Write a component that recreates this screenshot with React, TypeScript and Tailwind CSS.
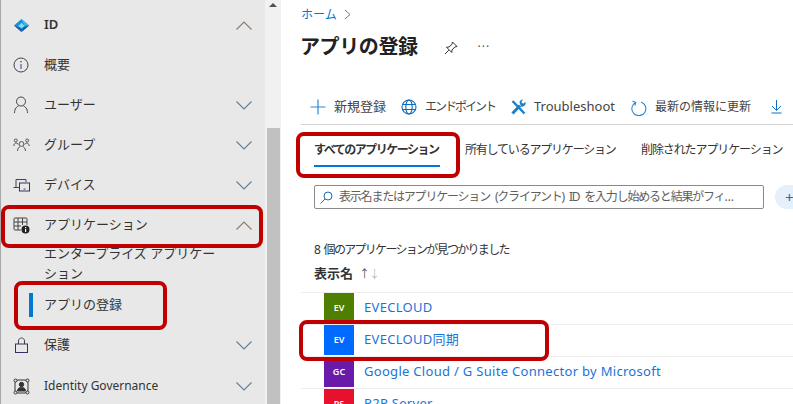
import React from "react";

const font = "font-['Noto_Sans','Noto_Sans_CJK_JP',sans-serif]";

const Chevron = ({ up }: { up?: boolean }) => (
  <svg width="16" height="9" viewBox="0 0 16 9" fill="none" className="shrink-0">
    <path
      d={up ? "M0.500 8.500 L8 1 L15.500 8.500" : "M0.500 0.500 L8 8 L15.500 0.500"}
      stroke={up ? "#8a7a6a" : "#5f7f9a"}
      strokeWidth="1.100"
    />
  </svg>
);

const IdIcon = () => (
  <svg width="17" height="15" viewBox="0 0 18 16">
    <path d="M9 1 L17 8 L9 15 L1 8 Z" fill="#1b8fd8" />
    <path d="M9 1 L17 8 L12 8 Z" fill="#2fc0ee" />
    <path d="M1 8 L9 15 L9 11 Z" fill="#1a5fa8" />
    <path d="M9 15 L17 8 L11 10 Z" fill="#0f4f96" />
    <path d="M9 5 L12.500 8.500 L9 11 L5.500 8.500 Z" fill="#7fdcf7" />
  </svg>
);

const InfoIcon = () => (
  <svg width="16" height="16" viewBox="0 0 16 16" fill="none">
    <circle cx="8" cy="8" r="7" stroke="#444" />
    <path d="M8 7 V12" stroke="#5a2d82" />
    <circle cx="8" cy="4.800" r="0.800" fill="#5a2d82" />
  </svg>
);

const UserIcon = () => (
  <svg width="16" height="18" viewBox="0 0 16 18" fill="none" stroke="#444">
    <circle cx="8" cy="5.500" r="4.500" />
    <path d="M1.500 17 C1.500 12.500 4 10.500 5.500 10 M14.500 17 C14.500 12.500 12 10.500 10.500 10" />
  </svg>
);

const GroupIcon = () => (
  <svg width="17" height="14" viewBox="0 0 17 14" fill="none" stroke="#444" strokeWidth="0.900">
    <circle cx="8.500" cy="6" r="2.400" />
    <path d="M4.500 13 C4.500 10 6.500 9 7 8.500 M12.500 13 C12.500 10 10.500 9 10 8.500" />
    <circle cx="2.800" cy="2.500" r="1.500" />
    <circle cx="14.200" cy="2.500" r="1.500" />
    <path d="M0.800 8 C1 6 2 5 3 5 C4.500 5.200 5 6 5.300 6.500 M16.200 8 C16 6 15 5 14 5 C12.500 5.200 12 6 11.700 6.500" />
  </svg>
);

const DeviceIcon = () => (
  <svg width="17" height="14" viewBox="0 0 17 14" fill="none" stroke="#444">
    <path d="M3 9.500 V1.500 H13 V4" />
    <path d="M0.500 9.500 H6" />
    <rect x="6.500" y="5" width="10" height="8" stroke="#3a2d6a" />
    <path d="M10.500 11 H12.500" />
  </svg>
);

const AppsIcon = () => (
  <svg width="17" height="17" viewBox="0 0 17 17" fill="none">
    <path
      d="M2 1 H13 Q14 1 14 2 V8 M8 13 H2 Q1 13 1 12 V2 Q1 1 2 1 M1 5 H14 M1 9 H8 M5 1 V13 M9.500 1 V8"
      stroke="#444"
    />
    <circle cx="12.500" cy="12.500" r="4" fill="#222" />
    <rect x="12" y="12" width="1.200" height="3" fill="#fff" />
    <rect x="12" y="10" width="1.200" height="1.200" fill="#fff" />
  </svg>
);

const LockIcon = () => (
  <svg width="13" height="16" viewBox="0 0 13 16" fill="none" stroke="#444" className="ml-[2px]">
    <path d="M3.500 7 V4 C3.500 0 9.500 0 9.500 4 V7" />
    <rect x="0.500" y="7" width="12" height="8.500" stroke="#3a2d6a" />
  </svg>
);

const GovIcon = () => (
  <svg width="17" height="17" viewBox="0 0 17 17" fill="none" stroke="#333">
    <rect x="2" y="2" width="13" height="13" rx="3" />
    <circle cx="8.500" cy="6.500" r="2.200" fill="#333" />
    <path d="M4.500 13 C4.500 10 7 9.500 8.500 9.500 C10 9.500 12.500 10 12.500 13 Z" fill="#333" />
    <circle cx="2.500" cy="2.500" r="1.500" fill="#e8e8e8" />
    <circle cx="14.500" cy="2.500" r="1.500" fill="#e8e8e8" />
    <circle cx="2.500" cy="14.500" r="1.500" fill="#e8e8e8" />
    <circle cx="14.500" cy="14.500" r="1.500" fill="#e8e8e8" />
  </svg>
);

const NavRow = ({
  icon,
  label,
  chevron,
  labelClass = "text-[13px]",
}: {
  icon: React.ReactNode;
  label: string;
  chevron?: "up" | "down";
  labelClass?: string;
}) => (
  <div className="flex h-10 items-center pl-[12px] pr-[13px]">
    <div className="flex w-[31px] shrink-0 items-center">{icon}</div>
    <span className={`flex-1 text-[#333] ${labelClass}`}>{label}</span>
    {chevron && <Chevron up={chevron === "up"} />}
  </div>
);

const ToolbarItem = ({
  icon,
  label,
  width,
  labelClass = "text-[13px]",
}: {
  icon: React.ReactNode;
  label: string;
  width: string;
  labelClass?: string;
}) => (
  <div className={`flex shrink-0 items-center gap-[8px] ${width}`}>
    {icon}
    <span className={`whitespace-nowrap text-[#444] ${labelClass}`}>{label}</span>
  </div>
);

const apps = [
  { badge: "EV", color: "bg-[#4f7f00]", name: "EVECLOUD" },
  { badge: "EV", color: "bg-[#0069ff]", name: "EVECLOUD同期" },
  { badge: "GC", color: "bg-[#6a1aa8]", name: "Google Cloud / G Suite Connector by Microsoft" },
  { badge: "PS", color: "bg-[#e8112d]", name: "P2P Server" },
];

const blue = "#2b88d8";

export default function App() {
  return (
    <div className={`relative flex h-[404px] w-[793px] overflow-hidden bg-white ${font}`}>
      {/* sidebar */}
      <aside className="h-full w-[265px] shrink-0 border-l border-[#a8a8a8] bg-[#e8e8e8] pt-[5px]">
        <NavRow icon={<IdIcon />} label="ID" chevron="up" labelClass="text-[13px] font-semibold" />
        <NavRow icon={<InfoIcon />} label="概要" />
        <NavRow icon={<UserIcon />} label="ユーザー" chevron="down" />
        <NavRow icon={<GroupIcon />} label="グループ" chevron="down" />
        <NavRow icon={<DeviceIcon />} label="デバイス" chevron="down" />
        <NavRow icon={<AppsIcon />} label="アプリケーション" chevron="up" />
        <div className="-mt-[2px] w-[175px] pb-[2px] pl-[43px] text-[13px] leading-[20px] text-[#333]">
          <div className="whitespace-nowrap">エンタープライズ アプリケー</div>
          <div>ション</div>
        </div>
        <div className="flex h-[40px] items-center pl-[28px]">
          <div className="mr-[11px] h-[24px] w-[4px] bg-[#0078d4]" />
          <span className="text-[13px] text-[#333]">アプリの登録</span>
        </div>
        <NavRow icon={<LockIcon />} label="保護" chevron="down" />
        <div className="mt-[1px]">
          <NavRow icon={<GovIcon />} label="Identity Governance" chevron="down" labelClass="text-[12px]" />
        </div>
      </aside>

      {/* scrollbar */}
      <div className="flex h-full w-[16px] shrink-0 flex-col items-center bg-[#f1f1f1]">
        <div className="mt-[3px] h-0 w-0 border-x-[4px] border-b-[4px] border-x-transparent border-b-[#505050]" />
        <div className="mt-[121px] w-[13px] flex-1 bg-[#c1c1c1]" />
      </div>

      {/* main */}
      <main className="min-w-0 flex-1 pl-[20px]">
        <div className="flex h-[28px] items-center gap-[7px] pt-[1px] text-[12px] text-[#0078d4]">
          <span>ホーム</span>
          <svg width="7" height="11" viewBox="0 0 7 11" fill="none">
            <path d="M1 1 L6 5.500 L1 10" stroke="#777" />
          </svg>
        </div>
        <div className="flex h-[38px] items-center">
          <h1 className="-ml-[1px] text-[20px] font-bold tracking-[-0.4px] text-[#222]">アプリの登録</h1>
          <svg width="14" height="14" viewBox="0 0 14 14" fill="none" stroke="#333" className="ml-[26px] mt-[2px]">
            <path d="M8.500 1 L13 5.500 L10.800 6 L8 9 L7.800 11.500 L2.500 6.200 L5 6 L8 3.200 Z M4.800 9.200 L1 13" />
          </svg>
          <span className="ml-[20px] text-[12px] tracking-[1px] text-[#555]">···</span>
        </div>

        <div className="mt-[25px] flex h-[34px] items-center gap-[14px] overflow-hidden border-b border-[#d4d4d4] pb-[1px] pl-[9px]">
          <ToolbarItem
            width="w-[77px]"
            label="新規登録"
            icon={
              <svg width="16" height="16" viewBox="0 0 16 16" stroke={blue} strokeWidth="1.200">
                <path d="M8 0.500 V15.500 M0.500 8 H15.500" />
              </svg>
            }
          />
          <ToolbarItem
            width="w-[95px]"
            label="エンドポイント"
            labelClass="text-[12px] tracking-[-2px]"
            icon={
              <svg width="16" height="16" viewBox="0 0 16 16" fill="none" stroke="#0f6cbd" strokeWidth="1.100" className="shrink-0">
                <circle cx="8" cy="8" r="7" />
                <ellipse cx="8" cy="8" rx="3.200" ry="7" />
                <path d="M1.500 5.500 H14.500 M1.500 10.500 H14.500" />
              </svg>
            }
          />
          <ToolbarItem
            width="w-[106px]"
            label="Troubleshoot"
            icon={
              <svg width="16" height="16" viewBox="0 0 16 16" fill="none" className="shrink-0">
                <path d="M2.500 2 L14.500 14.500" stroke="#1b7fc9" strokeWidth="2.400" />
                <path d="M2.500 14.500 L10 6.500" stroke="#1b7fc9" strokeWidth="3" />
                <path d="M9.500 3.500 A3.600 3.600 0 0 1 13 0.500 L11.300 3 L13 4.800 L15.500 3 A3.600 3.600 0 0 1 11 7.500 Z" fill="#1b7fc9" />
              </svg>
            }
          />
          <ToolbarItem
            width="w-[127px]"
            label="最新の情報に更新"
            labelClass="text-[12px]"
            icon={
              <svg width="17" height="17" viewBox="0 0 17 17" fill="none" stroke={blue} strokeWidth="1.100" className="shrink-0">
                <path d="M5.500 2.500 A7 7 0 1 0 11 2 M2.500 1 L5.800 2.500 L4.800 5.500" transform="translate(0 1)" />
              </svg>
            }
          />
          <svg width="11" height="14" viewBox="0 0 11 14" fill="none" stroke="#0f6cbd" className="shrink-0">
            <path d="M5.500 0 V10 M1 6 L5.500 10.500 L10 6 M0.500 13 H10.500" />
          </svg>
        </div>

        {/* tabs */}
        <div className="mt-[9px] flex h-[33px] items-start pl-[13px]">
          <div className="mr-[25px] flex h-[33px] w-[126px] shrink-0 flex-col">
            <span className="flex h-[31px] items-center whitespace-nowrap text-[12px] font-bold tracking-[-1.500px] text-[#333]">
              すべてのアプリケーション
            </span>
            <div className="h-[2px] bg-[#0078d4]" />
          </div>
          <span className="flex h-[31px] w-[176px] shrink-0 items-center whitespace-nowrap text-[12px] tracking-[-1.200px] text-[#333]">
            所有しているアプリケーション
          </span>
          <span className="flex h-[31px] items-center whitespace-nowrap text-[12px] tracking-[-1.100px] text-[#333]">
            削除されたアプリケーション
          </span>
        </div>

        {/* search */}
        <div className="mt-[18px] flex h-[24px] items-center pl-[13px]">
          <div className="flex h-[24px] w-[450px] shrink-0 items-center gap-[6px] rounded-[2px] border border-[#8a8a8a] pl-[5px]">
            <svg width="13" height="13" viewBox="0 0 13 13" fill="none" stroke="#0f6cbd" className="shrink-0">
              <circle cx="8" cy="5" r="4" />
              <path d="M5 8 L0.500 12.500" />
            </svg>
            <span className="whitespace-nowrap text-[12px] tracking-[-1.200px] text-[#605e5c] [word-spacing:3px]">
              表示名またはアプリケーション (クライアント) ID を入力し始めると結果がフィ…
            </span>
          </div>
          <div className="ml-[11px] flex h-[24px] w-[40px] shrink-0 items-center rounded-l-full bg-[#e5f0fa] pl-[10px] text-[15px] leading-none text-[#0078d4]">
            +
          </div>
        </div>

        <div className="mt-[32px] pl-[13px] text-[12px] leading-[18px] tracking-[-1.700px] text-[#333] [word-spacing:3px]">
          8 個のアプリケーションが見つかりました
        </div>
        <div className="mt-[5px] flex h-[20px] items-center pl-[13px] text-[13px] font-semibold text-[#333]">
          <span>表示名</span>
          <span className="ml-[6px] text-[11px] font-normal text-[#555]">↑</span>
          <span className="-ml-[1px] text-[11px] font-normal text-[#bbb]">↓</span>
        </div>

        {/* app list */}
        <div className="mt-[8px]">
          {apps.map((app) => (
            <div key={app.name} className="flex h-[32px] items-start border-t border-[#eeeeee] pl-[23px]">
              <div
                className={`flex h-[30px] w-[30px] shrink-0 items-center justify-center text-[9px] font-semibold text-white ${app.color}`}
              >
                {app.badge}
              </div>
              <span className="ml-[10px] mt-[4px] whitespace-nowrap text-[13px] leading-[20px] tracking-[0.3px] text-[#1a73d8]">
                {app.name}
              </span>
            </div>
          ))}
        </div>
      </main>

      {/* red annotations */}
      <div className="absolute left-[1px] top-[205px] h-[43px] w-[262px] rounded-[8px] border-[4px] border-[#c00000]" />
      <div className="absolute left-[14px] top-[281px] h-[49px] w-[153px] rounded-[8px] border-[4px] border-[#c00000]" />
      <div className="absolute left-[296px] top-[132px] h-[46px] w-[164px] rounded-[8px] border-[4px] border-[#c00000]" />
      <div className="absolute left-[299px] top-[320px] h-[41px] w-[250px] rounded-[8px] border-[4px] border-[#c00000]" />
    </div>
  );
}
